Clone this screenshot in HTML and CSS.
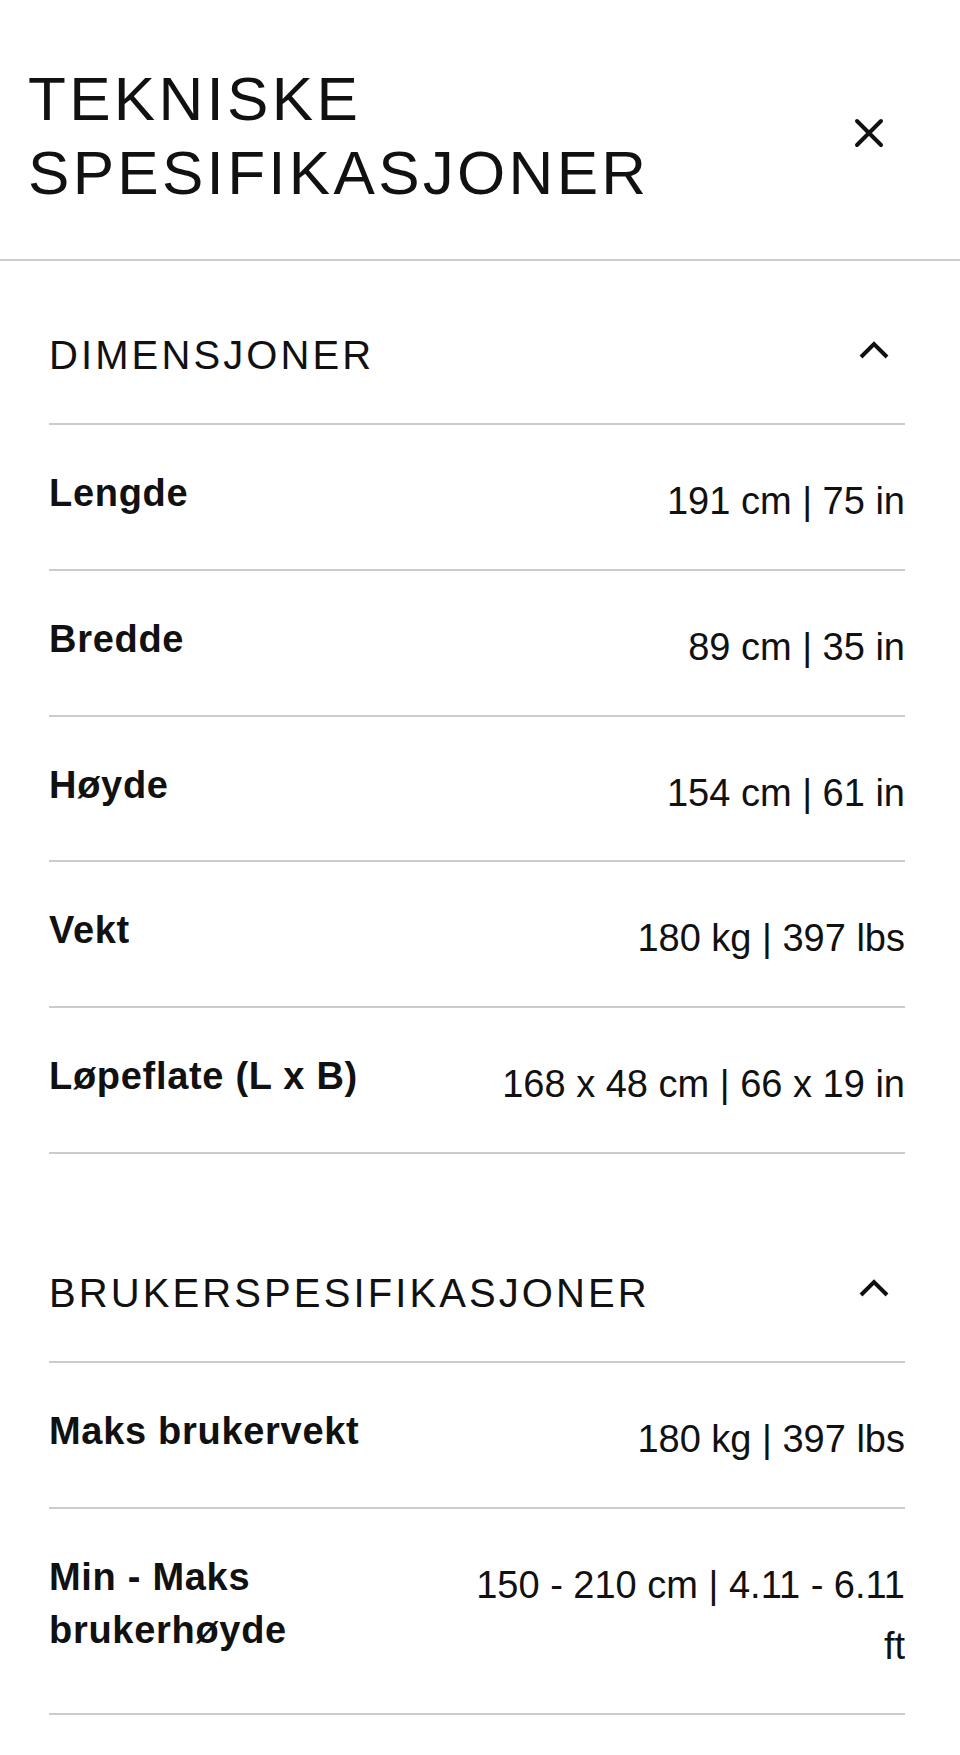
FILE: index.html
```html
<!DOCTYPE html>
<html lang="no">
<head>
  <meta charset="UTF-8">
  <meta name="viewport" content="width=device-width, initial-scale=1.0">
  <title>Tekniske spesifikasjoner</title>
  <link rel="stylesheet" href="styles.css">
</head>
<body>
  <div class="sheet">
    <header class="sheet-header">
      <h1 class="sheet-title">TEKNISKE SPESIFIKASJONER</h1>
      <button class="close-btn" type="button" aria-label="Lukk">
        <svg width="30" height="30" viewBox="0 0 30 30">
          <path d="M3 3 L27 27 M27 3 L3 27" />
        </svg>
      </button>
    </header>

    <div class="spec-groups">
      <!-- Dimensjoner -->
      <section class="spec-group">
        <div class="group-head">
          <h2>DIMENSJONER</h2>
          <svg class="chevron" width="30" height="18" viewBox="0 0 30 18">
            <path d="M2 16 L15 3 L28 16" />
          </svg>
        </div>
        <div class="spec-row">
          <span class="spec-label">Lengde</span>
          <span class="spec-value">191 cm | 75 in</span>
        </div>
        <div class="spec-row">
          <span class="spec-label">Bredde</span>
          <span class="spec-value">89 cm | 35 in</span>
        </div>
        <div class="spec-row">
          <span class="spec-label">Høyde</span>
          <span class="spec-value">154 cm | 61 in</span>
        </div>
        <div class="spec-row">
          <span class="spec-label">Vekt</span>
          <span class="spec-value">180 kg | 397 lbs</span>
        </div>
        <div class="spec-row">
          <span class="spec-label">Løpeflate (L x B)</span>
          <span class="spec-value">168 x 48 cm | 66 x 19 in</span>
        </div>
      </section>

      <!-- Brukerspesifikasjoner -->
      <section class="spec-group">
        <div class="group-head">
          <h2>BRUKERSPESIFIKASJONER</h2>
          <svg class="chevron" width="30" height="18" viewBox="0 0 30 18">
            <path d="M2 16 L15 3 L28 16" />
          </svg>
        </div>
        <div class="spec-row">
          <span class="spec-label">Maks brukervekt</span>
          <span class="spec-value">180 kg | 397 lbs</span>
        </div>
        <div class="spec-row">
          <span class="spec-label">Min - Maks brukerhøyde</span>
          <span class="spec-value">150 - 210 cm | 4.11 - 6.11 ft</span>
        </div>
      </section>
    </div>
  </div>
</body>
</html>
```

FILE: styles.css
```css
/* General styling */
body {
  margin: 0;
  font-family: "Liberation Sans", Arial, sans-serif;
  background-color: #fff;
  color: #111;
}
.sheet {
  background-color: #fff;
}
/* Header */
.sheet-header {
  display: flex;
  justify-content: space-between;
  align-items: flex-start;
  gap: 20px;
  padding: 62px 76px 49px 28px;
  border-bottom: 2px solid #cccccc;
}
.sheet-title {
  margin: 0;
  font-size: 62px;
  font-weight: normal;
  line-height: 74px;
  letter-spacing: 3.3px;
}
.close-btn {
  flex-shrink: 0;
  margin-top: 56px;
  padding: 0;
  border: none;
  background: none;
  cursor: pointer;
}
.close-btn svg {
  display: block;
  fill: none;
  stroke: #111;
  stroke-width: 4;
  stroke-linecap: round;
}
/* Spec groups */
.spec-groups {
  padding: 0 55px 0 49px;
}
.spec-group + .spec-group {
  margin-top: 45px;
}
.group-head {
  display: flex;
  justify-content: space-between;
  align-items: flex-start;
  padding: 70px 0 44px;
  border-bottom: 2px solid #cccccc;
}
.group-head h2 {
  margin: 0;
  font-size: 40px;
  font-weight: normal;
  line-height: 48px;
  letter-spacing: 3.1px;
}
.chevron {
  display: block;
  margin: 10px 16px 0 0;
  fill: none;
  stroke: #111;
  stroke-width: 4;
}
/* Rows */
.spec-row {
  display: flex;
  justify-content: space-between;
  align-items: flex-start;
  gap: 24px;
  padding: 42px 0 37px;
  border-bottom: 2px solid #cccccc;
}
.spec-label {
  flex: 1 1 auto;
  min-width: 0;
  font-size: 38px;
  font-weight: bold;
  line-height: 1.4;
  letter-spacing: 0.7px;
}
.spec-value {
  flex-shrink: 0;
  max-width: 450px;
  padding-top: 4px;
  font-size: 38px;
  line-height: 1.6;
  text-align: right;
}
```
